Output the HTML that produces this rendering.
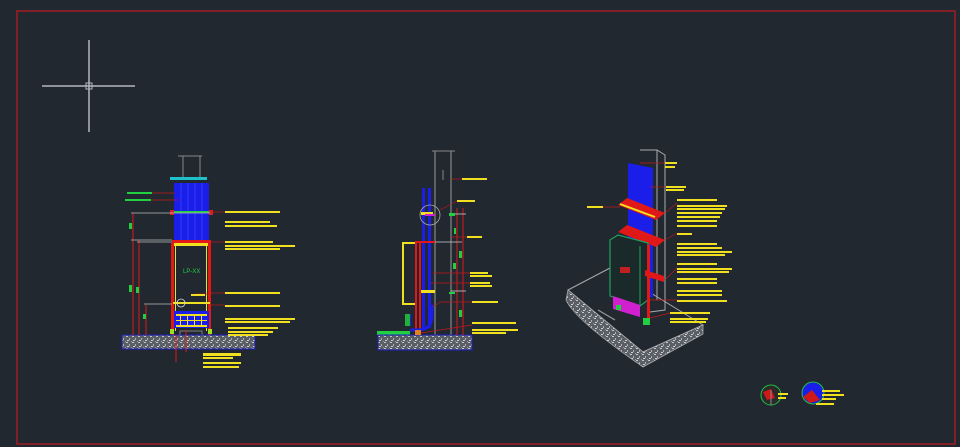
<!DOCTYPE html>
<html><head><style>html,body{margin:0;padding:0;background:#212830;}svg{display:block}</style></head>
<body>
<svg width="960" height="447" viewBox="0 0 960 447" xmlns="http://www.w3.org/2000/svg">
<defs>
<pattern id="hatch" width="6" height="6" patternUnits="userSpaceOnUse">
<rect width="6" height="6" fill="#5a5e66"/><rect x="0" y="0" width="2" height="1" fill="#c8c8c8"/><rect x="3" y="2" width="1" height="2" fill="#b0b0b0"/><rect x="1" y="4" width="2" height="1" fill="#d0d0d0"/><rect x="5" y="5" width="1" height="1" fill="#999"/>
</pattern>
</defs>
<rect width="960" height="447" fill="#212830"/>
<rect x="17" y="11" width="938" height="433" fill="none" stroke="#a01c22" stroke-width="1.5"/>
<!-- crosshair -->
<g stroke="#b4b8c0" stroke-width="1.5"><line x1="42" y1="86" x2="135" y2="86"/><line x1="89" y1="40" x2="89" y2="132"/></g>
<rect x="86" y="83" width="6" height="6" fill="none" stroke="#b4b8c0" stroke-width="1"/>

<!-- LEFT DRAWING -->
<g>
<line x1="178" y1="156" x2="202" y2="156" stroke="#888" stroke-width="1"/>
<line x1="183" y1="156" x2="183" y2="180" stroke="#888"/><line x1="200" y1="156" x2="200" y2="180" stroke="#888"/>
<rect x="170" y="177" width="37" height="3" fill="#20c0c8"/>
<rect x="174" y="183" width="35" height="58" fill="#1a1ee8"/>
<g stroke="#3a50ff" stroke-width="0.7"><line x1="181" y1="183" x2="181" y2="241"/><line x1="188" y1="183" x2="188" y2="241"/><line x1="195" y1="183" x2="195" y2="241"/><line x1="202" y1="183" x2="202" y2="241"/></g>
<line x1="174" y1="212" x2="209" y2="212" stroke="#20d040" stroke-width="2"/>
<rect x="170" y="210" width="4" height="5" fill="#e02020"/><rect x="209" y="210" width="4" height="5" fill="#e02020"/>
<rect x="172" y="240" width="39" height="3" fill="#e01818"/>
<rect x="172" y="243" width="39" height="3" fill="#f0e020"/>
<rect x="171" y="243" width="3" height="92" fill="#e01818"/><rect x="208" y="243" width="3" height="92" fill="#e01818"/>
<rect x="175" y="246" width="1" height="85" fill="#f0e020"/><rect x="206" y="246" width="1" height="85" fill="#f0e020"/>
<text x="183" y="273" font-family="Liberation Sans, sans-serif" font-size="6" fill="#20d040">LP-XX</text>
<rect x="173" y="302" width="37" height="2" fill="#f0e020"/>
<circle cx="181" cy="303" r="4" fill="none" stroke="#ddd" stroke-width="0.8"/>
<rect x="174" y="311" width="35" height="17" fill="#1a1ee8"/>
<g fill="#f0e020"><rect x="176" y="314" width="31" height="2"/><rect x="176" y="320" width="31" height="1"/><rect x="176" y="325" width="31" height="2"/><rect x="180" y="314" width="1" height="12"/><rect x="187" y="314" width="1" height="12"/><rect x="194" y="314" width="1" height="12"/><rect x="201" y="314" width="1" height="12"/></g>
<rect x="170" y="329" width="4" height="5" fill="#a0e020"/><rect x="208" y="329" width="4" height="5" fill="#a0e020"/>
<rect x="180" y="331" width="22" height="4" fill="none" stroke="#999" stroke-width="0.8"/>
<rect x="122" y="335" width="133" height="14" fill="url(#hatch)" stroke="#2020c0" stroke-width="1"/>
<g stroke="#e01818" stroke-width="1"><line x1="133" y1="213" x2="133" y2="335"/><line x1="139" y1="240" x2="139" y2="335"/><line x1="146" y1="305" x2="146" y2="335"/>
<line x1="176" y1="335" x2="176" y2="362"/><line x1="186" y1="330" x2="186" y2="352"/></g>
<g stroke="#bbb" stroke-width="0.8"><line x1="131" y1="213" x2="210" y2="213"/><line x1="131" y1="240" x2="172" y2="240"/><line x1="137" y1="242" x2="172" y2="242"/><line x1="144" y1="304" x2="172" y2="304"/></g>
<g fill="#20d040"><rect x="129" y="223" width="3" height="6"/><rect x="129" y="285" width="3" height="7"/><rect x="136" y="287" width="3" height="6"/><rect x="143" y="314" width="3" height="5"/>
<rect x="127" y="192" width="25" height="2"/><rect x="125" y="199" width="26" height="2"/></g>
<g stroke="#c01818" stroke-width="0.7"><line x1="152" y1="193" x2="175" y2="193"/><line x1="151" y1="200" x2="178" y2="200"/><line x1="211" y1="212" x2="225" y2="212"/><line x1="211" y1="242" x2="225" y2="242"/><line x1="211" y1="293" x2="225" y2="293"/><line x1="211" y1="305" x2="225" y2="305"/><line x1="195" y1="294" x2="210" y2="294"/></g>
<g fill="#f0e020">
<rect x="225" y="211" width="55" height="2"/><rect x="225" y="221" width="45" height="2"/><rect x="225" y="225" width="52" height="2"/>
<rect x="225" y="241" width="48" height="2"/><rect x="225" y="245" width="70" height="2"/><rect x="225" y="248" width="55" height="2"/>
<rect x="225" y="292" width="55" height="2"/><rect x="225" y="305" width="55" height="2"/>
<rect x="225" y="318" width="70" height="2"/><rect x="225" y="321" width="65" height="2"/><rect x="228" y="327" width="50" height="2"/><rect x="228" y="331" width="45" height="2"/><rect x="228" y="334" width="40" height="2"/>
<rect x="191" y="294" width="14" height="2"/>
<rect x="203" y="353" width="38" height="3"/><rect x="203" y="357" width="30" height="2"/><rect x="203" y="362" width="38" height="2"/><rect x="203" y="366" width="36" height="2"/></g>
</g>

<!-- MIDDLE DRAWING -->
<g>
<line x1="432" y1="151" x2="455" y2="151" stroke="#888"/>
<line x1="435" y1="151" x2="435" y2="335" stroke="#888" stroke-width="1.2"/><line x1="451" y1="151" x2="451" y2="335" stroke="#888" stroke-width="1.2"/>
<line x1="443" y1="170" x2="443" y2="180" stroke="#888"/>
<rect x="422" y="188" width="3" height="140" fill="#1a1ee8"/><rect x="428" y="188" width="3" height="140" fill="#1a1ee8"/>
<circle cx="430" cy="215" r="10" fill="none" stroke="#aaa" stroke-width="0.8"/>
<rect x="421" y="212" width="12" height="3" fill="#f0e020"/><rect x="425" y="214" width="10" height="2" fill="#d020d0"/>
<rect x="402" y="242" width="2" height="63" fill="#f0e020"/><rect x="402" y="242" width="14" height="2" fill="#f0e020"/><rect x="402" y="303" width="14" height="2" fill="#f0e020"/>
<rect x="415" y="242" width="2" height="93" fill="#e01818"/><rect x="419" y="242" width="2" height="93" fill="#e01818"/>
<line x1="415" y1="242" x2="435" y2="242" stroke="#e01818" stroke-width="2"/>
<rect x="421" y="290" width="14" height="3" fill="#f0e020"/>
<path d="M432 305 L432 315 Q432 330 418 330 L410 330" fill="none" stroke="#1a1ee8" stroke-width="3"/>
<line x1="410" y1="314" x2="410" y2="326" stroke="#1a1ee8" stroke-width="2"/>
<rect x="405" y="314" width="5" height="12" fill="#20b040"/>
<rect x="377" y="331" width="33" height="4" fill="#20d040"/>
<rect x="378" y="335" width="94" height="15" fill="url(#hatch)" stroke="#2020c0"/>
<rect x="415" y="330" width="6" height="5" fill="#e08020"/>
<g stroke="#e01818" stroke-width="1"><line x1="457" y1="208" x2="457" y2="335"/><line x1="463" y1="208" x2="463" y2="335"/></g>
<g stroke="#ccc" stroke-width="0.8"><line x1="435" y1="242" x2="462" y2="242"/><line x1="451" y1="214" x2="466" y2="214"/><line x1="451" y1="291" x2="466" y2="291"/></g>
<g fill="#20d040"><rect x="449" y="213" width="6" height="3"/><rect x="454" y="228" width="2" height="6"/><rect x="459" y="251" width="3" height="7"/><rect x="453" y="263" width="3" height="6"/><rect x="449" y="292" width="6" height="2"/><rect x="459" y="310" width="3" height="7"/></g>
<g stroke="#c01818" stroke-width="0.7"><line x1="451" y1="179" x2="462" y2="179"/><line x1="440" y1="210" x2="457" y2="201"/><line x1="451" y1="237" x2="467" y2="237"/><line x1="433" y1="273" x2="470" y2="273"/><line x1="431" y1="283" x2="470" y2="283"/><line x1="433" y1="307" x2="440" y2="302"/><line x1="440" y1="302" x2="472" y2="302"/><line x1="421" y1="333" x2="472" y2="325"/></g>
<g fill="#f0e020">
<rect x="462" y="178" width="25" height="2"/><rect x="457" y="200" width="18" height="2"/><rect x="467" y="236" width="15" height="2"/>
<rect x="470" y="272" width="18" height="2"/><rect x="470" y="275" width="22" height="2"/><rect x="470" y="282" width="20" height="2"/><rect x="470" y="285" width="22" height="2"/>
<rect x="472" y="301" width="26" height="2"/><rect x="472" y="322" width="44" height="2"/><rect x="472" y="329" width="46" height="2"/><rect x="472" y="332" width="34" height="2"/></g>
</g>

<!-- RIGHT DRAWING -->
<g>
<path d="M568 290 L610 268 L703 325 L643 352 Z" fill="#212830" stroke="#aaa" stroke-width="1"/>
<path d="M568 290 L566 300 Q575 320 643 367 L703 334 L703 325 L643 352 Z" fill="url(#hatch)" stroke="#aaa" stroke-width="0.8"/>
<path d="M640 150 L657 150 L665 155 L665 310 L650 312" fill="none" stroke="#aaa" stroke-width="1"/>
<line x1="657" y1="150" x2="657" y2="300" stroke="#aaa"/>
<path d="M628 163 L653 168 L653 298 L628 288 Z" fill="#1a1ee8"/>
<path d="M618 205 L627 198 L665 213 L656 220 Z" fill="#e01818"/>
<path d="M620 204 L655 217" stroke="#f0e020" stroke-width="2"/>
<path d="M618 232 L627 225 L665 240 L656 247 Z" fill="#e01818"/>
<path d="M610 240 L618 235 L648 243 L648 300 L640 306 L610 296 Z" fill="#1a2a2a" stroke="#20a060" stroke-width="1.2"/>
<line x1="640" y1="246" x2="640" y2="306" stroke="#20a060"/>
<rect x="620" y="267" width="10" height="6" fill="#c02020"/>
<rect x="647" y="245" width="3" height="80" fill="#e01818"/>
<path d="M645 270 L664 276 L664 282 L645 276 Z" fill="#e01818"/>
<path d="M613 296 L640 305 L640 317 L613 309 Z" fill="#d020d0"/>
<rect x="616" y="305" width="5" height="5" fill="#20d040"/>
<rect x="643" y="318" width="7" height="7" fill="#20d040"/>
<g stroke="#c01818" stroke-width="0.7"><line x1="603" y1="207" x2="620" y2="207"/><line x1="640" y1="163" x2="665" y2="163"/><line x1="650" y1="187" x2="665" y2="187"/><line x1="665" y1="213" x2="677" y2="203"/><line x1="665" y1="240" x2="677" y2="233"/><line x1="665" y1="280" x2="677" y2="268"/><line x1="650" y1="300" x2="677" y2="300"/><line x1="650" y1="318" x2="670" y2="313"/></g>
<g fill="#f0e020">
<rect x="587" y="206" width="16" height="2"/><rect x="665" y="162" width="12" height="2"/><rect x="665" y="166" width="10" height="2"/>
<rect x="666" y="186" width="20" height="2"/><rect x="666" y="189" width="18" height="2"/>
<rect x="677" y="199" width="40" height="2"/><rect x="677" y="205" width="50" height="2"/><rect x="677" y="208" width="48" height="2"/><rect x="677" y="212" width="45" height="2"/><rect x="677" y="216" width="43" height="2"/><rect x="677" y="220" width="40" height="2"/><rect x="677" y="225" width="40" height="2"/>
<rect x="677" y="233" width="15" height="2"/><rect x="677" y="243" width="40" height="2"/><rect x="677" y="247" width="45" height="2"/><rect x="677" y="251" width="55" height="2"/><rect x="677" y="254" width="48" height="2"/>
<rect x="677" y="263" width="40" height="2"/><rect x="677" y="268" width="55" height="2"/><rect x="677" y="271" width="52" height="2"/><rect x="677" y="278" width="40" height="2"/><rect x="677" y="282" width="40" height="2"/><rect x="677" y="290" width="45" height="2"/><rect x="677" y="294" width="45" height="2"/><rect x="677" y="300" width="50" height="2"/>
<rect x="670" y="312" width="40" height="2"/><rect x="670" y="318" width="38" height="2"/><rect x="670" y="321" width="36" height="2"/></g>
<line x1="598" y1="310" x2="615" y2="320" stroke="#999" stroke-width="1.2"/>
</g>

<!-- circles bottom right -->
<circle cx="771" cy="395" r="10" fill="#2a2a2a" stroke="#20c040" stroke-width="1"/>
<path d="M763 392 L771 389 L775 398 L767 400 Z" fill="#d01818"/>
<line x1="771" y1="390" x2="771" y2="405" stroke="#888"/>
<rect x="778" y="393" width="10" height="2" fill="#f0e020"/><rect x="778" y="397" width="8" height="2" fill="#f0e020"/>
<circle cx="813" cy="393" r="11" fill="#1a1ee8" stroke="#20c040" stroke-width="1"/>
<path d="M803 397 L812 390 L820 400 L810 403 Z" fill="#d01818"/>
<rect x="822" y="390" width="18" height="2" fill="#f0e020"/><rect x="822" y="394" width="22" height="2" fill="#f0e020"/><rect x="822" y="398" width="14" height="2" fill="#f0e020"/><rect x="816" y="403" width="18" height="2" fill="#f0e020"/>
</svg>
</body></html>
